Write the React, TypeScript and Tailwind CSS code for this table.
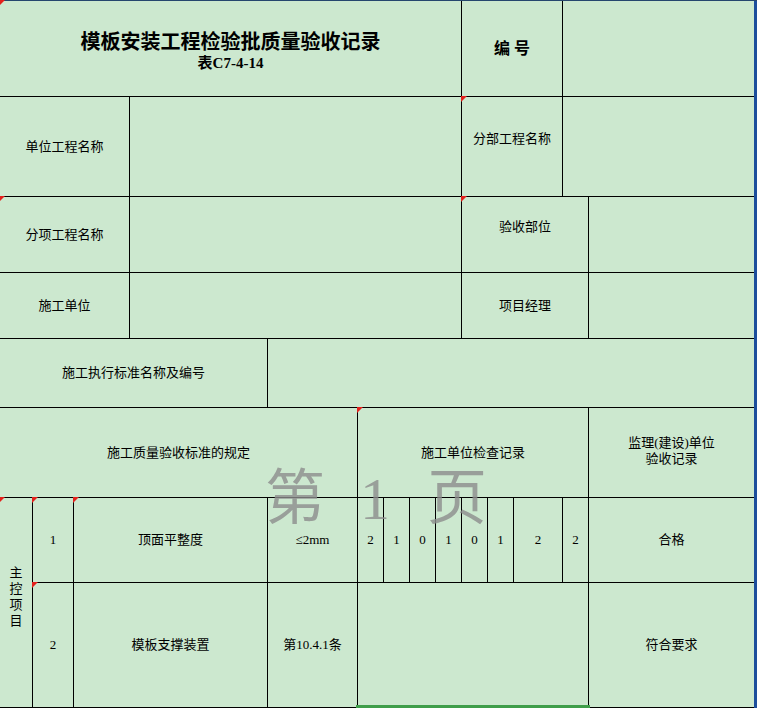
import React from 'react'

const Tri = () => (
    <span className="absolute -left-px -top-px h-0 w-0 border-t-[6px] border-r-[6px] border-t-[#e3211c] border-r-transparent" />
)

type CellProps = {
    pos: string
    className?: string
    mark?: boolean
    children?: React.ReactNode
}

const Cell = ({ pos, className = '', mark, children }: CellProps) => (
    <div className={`relative flex items-center justify-center bg-[#cce8cf] text-center ${pos} ${className}`}>
        {mark && <Tri />}
        {children}
    </div>
)

const checks = ['2', '1', '0', '1', '0', '1', '2', '2']
const checkCols = [
    'col-start-6 row-start-7',
    'col-start-7 row-start-7',
    'col-start-8 row-start-7',
    'col-start-9 row-start-7',
    'col-start-10 row-start-7',
    'col-start-11 row-start-7',
    'col-start-12 row-start-7',
    'col-start-13 row-start-7',
]

export default function App() {
    return (
        <div className="relative h-[708px] w-[757px] overflow-hidden bg-[#cce8cf] font-['Liberation_Serif','Noto_Sans_CJK_SC',serif] text-[13px] leading-4 text-black">
            <div className="h-px bg-[#25466e]" />
            <div className="flex">
                <div className="grid grid-cols-[32px_40px_55px_137px_89px_25px_25px_25px_25px_25px_25px_48px_25px_165px] grid-rows-[95px_99px_75px_65px_68px_89px_84px_124px] gap-px border-b border-black bg-black">
                    {/* header */}
                    <Cell pos="col-start-1 col-end-10 row-start-1" mark className="flex-col pt-[4px] font-bold">
                        <div className="text-[20px] leading-[24px]">模板安装工程检验批质量验收记录</div>
                        <div className="text-[15px] leading-[18px]">表C7-4-14</div>
                    </Cell>
                    <Cell pos="col-start-10 col-end-13 row-start-1" className="text-[16px] font-bold">
                        编 号
                    </Cell>
                    <Cell pos="col-start-13 col-end-15 row-start-1" />

                    <Cell pos="col-start-1 col-end-4 row-start-2">单位工程名称</Cell>
                    <Cell pos="col-start-4 col-end-10 row-start-2" />
                    <Cell pos="col-start-10 col-end-13 row-start-2" mark className="pb-4">
                        分部工程名称
                    </Cell>
                    <Cell pos="col-start-13 col-end-15 row-start-2" />

                    <Cell pos="col-start-1 col-end-4 row-start-3" mark>分项工程名称</Cell>
                    <Cell pos="col-start-4 col-end-10 row-start-3" />
                    <Cell pos="col-start-10 col-end-14 row-start-3" mark className="pb-4">
                        验收部位
                    </Cell>
                    <Cell pos="col-start-14 row-start-3" />

                    <Cell pos="col-start-1 col-end-4 row-start-4">施工单位</Cell>
                    <Cell pos="col-start-4 col-end-10 row-start-4" />
                    <Cell pos="col-start-10 col-end-14 row-start-4">项目经理</Cell>
                    <Cell pos="col-start-14 row-start-4" />

                    <Cell pos="col-start-1 col-end-5 row-start-5">施工执行标准名称及编号</Cell>
                    <Cell pos="col-start-5 col-end-15 row-start-5" />

                    <Cell pos="col-start-1 col-end-6 row-start-6">施工质量验收标准的规定</Cell>
                    <Cell pos="col-start-6 col-end-14 row-start-6" mark>施工单位检查记录</Cell>
                    <Cell pos="col-start-14 row-start-6" className="flex-col pb-1">
                        <div>监理(建设)单位</div>
                        <div>验收记录</div>
                    </Cell>

                    {/* 主控项目 */}
                    <Cell pos="col-start-1 row-start-7 row-end-9" mark className="flex-col pb-3 leading-[16px]">
                        <span>主</span>
                        <span>控</span>
                        <span>项</span>
                        <span>目</span>
                    </Cell>
                    <Cell pos="col-start-2 row-start-7" mark>1</Cell>
                    <Cell pos="col-start-3 col-end-5 row-start-7" mark>顶面平整度</Cell>
                    <Cell pos="col-start-5 row-start-7">≤2mm</Cell>
                    {checks.map((v, i) => (
                        <Cell key={i} pos={checkCols[i]}>
                            {v}
                        </Cell>
                    ))}
                    <Cell pos="col-start-14 row-start-7">合格</Cell>

                    <Cell pos="col-start-2 row-start-8" mark>2</Cell>
                    <Cell pos="col-start-3 col-end-5 row-start-8">模板支撑装置</Cell>
                    <Cell pos="col-start-5 row-start-8">第10.4.1条</Cell>
                    <Cell pos="col-start-6 col-end-14 row-start-8">
                        <span className="absolute -bottom-px -left-[2px] -right-[2px] z-10 h-[3px] bg-[#3f9e4a]" />
                    </Cell>
                    <Cell pos="col-start-14 row-start-8">符合要求</Cell>
                </div>
                <div className="w-[3px] bg-[#1c4e9c]" />
            </div>

            {/* page watermark */}
            <div className="pointer-events-none absolute left-[265px] top-[464px] flex text-[60px] leading-[70px] text-[#8c8c8c]/80">
                <span>第</span>
                <span className="ml-[35px]">1</span>
                <span className="ml-[37px]">页</span>
            </div>
        </div>
    )
}
